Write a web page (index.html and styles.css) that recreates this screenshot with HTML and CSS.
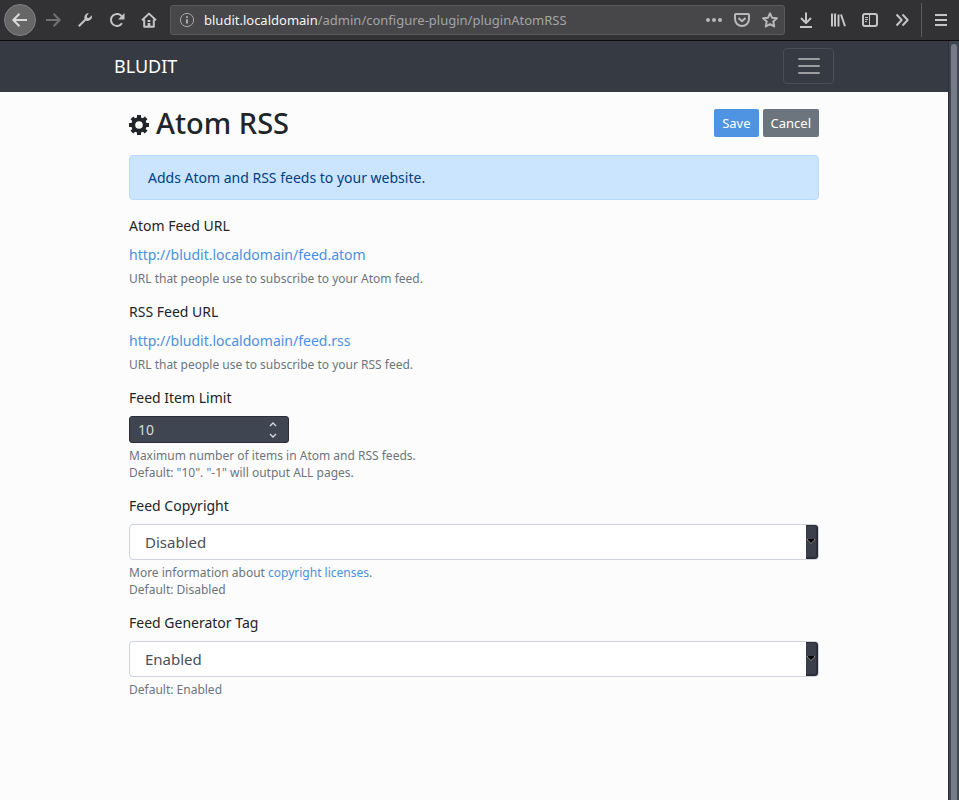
FILE: index.html
```html
<!DOCTYPE html>
<html lang="en">
<head>
<meta charset="utf-8">
<title>Atom RSS - Bludit</title>
<link rel="stylesheet" href="styles.css">
</head>
<body>
<header class="toolbar">
  <button class="tool back" aria-label="Back"><svg class="icon" viewBox="0 0 16 16"><path d="M15 8H1.5M7.5 1.8 1.3 8l6.2 6.2"/></svg></button>
  <button class="tool dim" aria-label="Forward"><svg class="icon" viewBox="0 0 16 16"><path d="M1 8h13.5M8.5 1.8 14.7 8l-6.2 6.2"/></svg></button>
  <button class="tool" aria-label="Developer tools"><svg class="icon" viewBox="0 0 16 16"><path d="M1.8 14.2 9 7"/><path class="fill" d="M11.8 1.1a4.4 4.4 0 0 0-4.2 5.9l1.7 1.7a4.4 4.4 0 0 0 5.5-5.5L12 6l-1.9-.2L9.9 4z"/></svg></button>
  <button class="tool" aria-label="Reload"><svg class="icon" viewBox="0 0 16 16"><path d="M13 11.2A6 6 0 1 1 13.2 5"/><path class="fill" d="M15.5 1v6.5H9z"/></svg></button>
  <button class="tool" aria-label="Home"><svg class="icon" viewBox="0 0 16 16"><path d="M1 8.3 8 1.6l7 6.7M3.2 7.5v7.3h9.6V7.5"/><path class="fill" d="M6.6 8h2.8v2H6.6zM6.6 11h2.8v4H6.6z"/></svg></button>
  <div class="address">
    <svg class="icon info" viewBox="0 0 16 16"><circle cx="8" cy="8" r="6.6"/><path d="M8 7.2v4.3M8 4.2v1.7"/></svg>
    <span class="url"><span class="host">bludit.localdomain</span>/admin/configure-plugin/pluginAtomRSS</span>
    <button class="action" aria-label="Page actions"><svg class="icon" viewBox="0 0 16 16"><g class="fill"><circle cx="2" cy="8" r="2"/><circle cx="8" cy="8" r="2"/><circle cx="14" cy="8" r="2"/></g></svg></button>
    <button class="action" aria-label="Save to Pocket"><svg class="icon" viewBox="0 0 16 16"><path d="M1.9 2h12.2q.9 0 .9.9V7A7 7 0 0 1 1 7V2.9Q1 2 1.900 2zM4.500 6 8 9.300 11.500 6"/></svg></button>
    <button class="action" aria-label="Bookmark"><svg class="icon" viewBox="0 0 16 16"><path d="m8 1.300 2 4.400 4.900.6-3.600 3.300.9 4.900L8 12.100l-4.200 2.400.9-4.900L1.100 6.300 6 5.700z"/></svg></button>
  </div>
  <button class="tool" aria-label="Downloads"><svg class="icon" viewBox="0 0 16 16"><path d="M8 .5v10.300M3 6l5 5 5-5M2 15h12"/></svg></button>
  <button class="tool" aria-label="Library"><svg class="icon" viewBox="0 0 16 16"><path d="M2 1.500v13M5 1.500v13M8.500 2.500v12M11 2.500l4 11.700"/></svg></button>
  <button class="tool" aria-label="Sidebars"><svg class="icon" viewBox="0 0 16 16"><rect x="1" y="2" width="14" height="12" rx="2"/><path class="thin" d="M7.500 2v12M3 5.500h3M3 7.500h3M3 9.500h2"/></svg></button>
  <button class="tool" aria-label="More tools"><svg class="icon" viewBox="0 0 16 16"><path d="m2.500 2.500 5.200 5.500-5.200 5.500M8.500 2.500l5.200 5.500-5.200 5.500"/></svg></button>
  <span class="rule"></span>
  <button class="tool menu" aria-label="Menu"><svg class="icon" viewBox="0 0 16 16"><path d="M2 3h12M2 8h12M2 13h12"/></svg></button>
</header>
<div class="viewport">
  <div class="page">
    <nav class="navbar">
      <div class="container nav-row">
        <a class="brand" href="#">BLUDIT</a>
        <button class="toggler" aria-label="Toggle navigation"><svg viewBox="0 0 26 26"><path d="M3 6h20M3 13h20M3 20h20"/></svg></button>
      </div>
    </nav>
    <main class="container">
      <form class="content">
        <div class="heading">
          <h1><svg class="gear" viewBox="0 0 20 20"><circle cx="10" cy="10" r="5.800"/><path d="M10 0v4.200M10 15.800V20M0 10h4.200M15.800 10H20M2.900 2.900l3 3M14.100 14.100l3 3M2.900 17.100l3-3M14.100 5.900l3-3"/></svg>Atom RSS</h1>
          <button type="button" class="btn save">Save</button>
          <button type="button" class="btn cancel">Cancel</button>
        </div>
        <div class="alert">Adds Atom and RSS feeds to your website.</div>
        <div class="group">
          <div class="label">Atom Feed URL</div>
          <a class="feed" href="#">http://bludit.localdomain/feed.atom</a>
          <p class="hint">URL that people use to subscribe to your Atom feed.</p>
        </div>
        <div class="group">
          <div class="label">RSS Feed URL</div>
          <a class="feed" href="#">http://bludit.localdomain/feed.rss</a>
          <p class="hint">URL that people use to subscribe to your RSS feed.</p>
        </div>
        <div class="group">
          <label class="label" for="limit">Feed Item Limit</label>
          <div class="number">
            <input id="limit" type="number" value="10" min="-1">
            <svg class="spin" viewBox="0 0 8 18"><path d="M1 5l3-3L7 5M1 13l3 3L7 13"/></svg>
          </div>
          <p class="hint">Maximum number of items in Atom and RSS feeds.<br>Default: "10". "-1" will output ALL pages.</p>
        </div>
        <div class="group">
          <label class="label" for="copyright">Feed Copyright</label>
          <div class="select">
            <select id="copyright"><option>Disabled</option></select>
            <span class="drop"><svg viewBox="0 0 8 5"><path class="edge" d="M0 0h8v1L4 5 0 1z"/><path d="M1 0h6v1L4 4 1 1z"/></svg></span>
          </div>
          <p class="hint">More information about <a href="#">copyright licenses</a>.<br>Default: Disabled</p>
        </div>
        <div class="group">
          <label class="label" for="generator">Feed Generator Tag</label>
          <div class="select">
            <select id="generator"><option>Enabled</option></select>
            <span class="drop"><svg viewBox="0 0 8 5"><path class="edge" d="M0 0h8v1L4 5 0 1z"/><path d="M1 0h6v1L4 4 1 1z"/></svg></span>
          </div>
          <p class="hint">Default: Enabled</p>
        </div>
      </form>
    </main>
  </div>
  <div class="scrollbar"><div class="thumb"></div></div>
</div>
</body>
</html>
```
FILE: styles.css
```css
* { box-sizing: border-box; }

body {
  margin: 0;
  height: 100vh;
  display: flex;
  flex-direction: column;
  overflow: hidden;
  background: #fcfcfc;
  color: #212529;
  font: 14px/22px "Noto Sans", sans-serif;
}

button { font: inherit; border: 0; padding: 0; background: none; }
a { color: #4a90e2; text-decoration: none; }

/* Browser toolbar */
.toolbar {
  flex: none;
  display: flex;
  align-items: center;
  height: 41px;
  padding: 0 2px 0 4px;
  background: #323234;
  border-bottom: 1px solid #0c0c0d;
}
.icon {
  display: block;
  width: 16px;
  height: 16px;
  fill: none;
  stroke: #c4c4c5;
  stroke-width: 2;
  stroke-linejoin: round;
}
.fill { fill: #c4c4c5; stroke: none; }
.thin { stroke-width: 1; }
.tool {
  flex: none;
  display: flex;
  align-items: center;
  justify-content: center;
  width: 32px;
  height: 32px;
}
.back {
  background: #676768;
  border: 1px solid #818182;
  border-radius: 50%;
}
.back .icon { stroke: #dadada; }
.dim { margin-left: 1px; }
.dim .icon { stroke: #717173; }
.address {
  flex: 1;
  min-width: 0;
  display: flex;
  align-items: center;
  height: 30px;
  margin: 0 5px;
  padding: 0 6px 0 8px;
  background: #474749;
  border: 1px solid #5b5b5d;
  border-radius: 3px;
}
.info { flex: none; stroke: #a8a8a9; stroke-width: 1; }
.info path { stroke-width: 2; }
.url {
  flex: 1;
  margin-left: 9px;
  overflow: hidden;
  white-space: nowrap;
  color: #a4a4a6;
  font-size: 13px;
}
.host { color: #f4f4f5; }
.action { margin-left: 12px; }
.action .icon { stroke: #b8b8b9; }
.action .fill { fill: #b8b8b9; stroke: none; }
.rule { width: 1px; height: 34px; margin-left: 3px; background: #5b5b5d; }
.menu { margin-left: 3px; }

/* Page and scroll bar */
.viewport { flex: 1; min-height: 0; display: flex; }
.page { flex: 1; min-width: 0; overflow: hidden; }
.scrollbar {
  width: 11px;
  padding: 3px 2px 0 2px;
  background: #404552;
  border-left: 1px solid #2b2e39;
}
.thumb { height: 100%; background: #767b87; border-radius: 3px 3px 0 0; }
.container { max-width: 720px; margin: 0 auto; }

.navbar { background: #363a42; }
.nav-row {
  display: flex;
  align-items: center;
  justify-content: space-between;
  height: 51px;
  padding-bottom: 2px;
}
.brand { color: #fff; font-size: 18px; }
.toggler {
  display: flex;
  align-items: center;
  justify-content: center;
  width: 51px;
  height: 36px;
  border: 1px solid #4a4e56;
  border-radius: 4px;
}
.toggler svg {
  width: 26px;
  height: 26px;
  fill: none;
  stroke: #9b9da1;
  stroke-width: 2;
  stroke-linecap: round;
}

/* Settings form */
.content { padding: 14px 15px; }
.heading { display: flex; align-items: center; gap: 4px; margin-bottom: 14px; }
h1 {
  flex: 1;
  display: flex;
  align-items: center;
  gap: 7px;
  margin: 0;
  font-size: 29px;
  line-height: 34px;
  font-weight: 500;
}
.gear {
  width: 20px;
  height: 20px;
  margin-top: 3px;
  fill: none;
  stroke: #212529;
  stroke-width: 4;
}
.btn {
  height: 28px;
  padding: 0 8px;
  border-radius: 2px;
  color: #fff;
  font-size: 13px;
}
.save { background: #4f93e3; }
.cancel { background: #6c757d; }
.alert {
  margin: 15px 0;
  padding: 11px 18px 10px;
  border: 1px solid #b8daff;
  border-radius: 4px;
  background: #cce5ff;
  color: #004085;
}
.group { margin-bottom: 14px; }
.label { display: block; margin-bottom: 7px; }
.feed { display: block; }
.hint { margin: 4px 0 0; color: #6c757d; font-size: 12px; line-height: 17px; }

.number { position: relative; width: 160px; }
.number input {
  display: block;
  width: 100%;
  height: 27px;
  padding: 0 8px;
  border: 1px solid #2b2e39;
  border-radius: 3px;
  background: #404552;
  color: #d3dae3;
  font: inherit;
  appearance: textfield;
}
.spin {
  position: absolute;
  top: 5px;
  right: 12px;
  width: 8px;
  height: 18px;
  fill: none;
  stroke: #d3dae3;
  stroke-width: 1.4;
  pointer-events: none;
}
.select { position: relative; }
.select select {
  display: block;
  width: 100%;
  height: 36px;
  padding: 0 15px 1px;
  border: 1px solid #ced4da;
  border-radius: 4px;
  background: #fff;
  color: #495057;
  font: inherit;
  font-size: 15px;
  appearance: none;
}
.drop {
  position: absolute;
  top: 1px;
  right: 1px;
  bottom: 1px;
  width: 12px;
  display: flex;
  align-items: center;
  justify-content: center;
  border: solid #2b2e39;
  border-width: 1px 2px 2px 0;
  border-radius: 0 3px 3px 0;
  background: #3b3f4c;
  pointer-events: none;
}
.drop svg { flex: none; width: 8px; height: 5px; fill: #000; }
.drop .edge { fill: #85867f; }
```
